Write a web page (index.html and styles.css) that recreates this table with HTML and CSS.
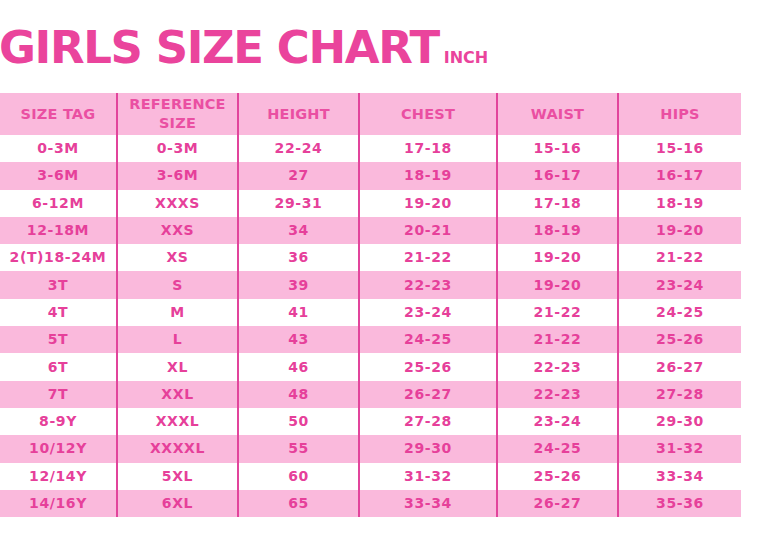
FILE: index.html
```html
<!DOCTYPE html>
<html>
<head>
<meta charset="utf-8">
<link rel="stylesheet" href="styles.css">
</head>
<body>
<div class="page">
  <h1 class="title">GIRLS SIZE CHART<span class="unit">INCH</span></h1>
  <div class="chart">
    <div class="row head">
      <div class="cell">SIZE TAG</div>
      <div class="cell">REFERENCE<br>SIZE</div>
      <div class="cell">HEIGHT</div>
      <div class="cell">CHEST</div>
      <div class="cell">WAIST</div>
      <div class="cell">HIPS</div>
    </div>
    <div class="row"><div class="cell">0-3M</div><div class="cell">0-3M</div><div class="cell">22-24</div><div class="cell">17-18</div><div class="cell">15-16</div><div class="cell">15-16</div></div>
    <div class="row alt"><div class="cell">3-6M</div><div class="cell">3-6M</div><div class="cell">27</div><div class="cell">18-19</div><div class="cell">16-17</div><div class="cell">16-17</div></div>
    <div class="row"><div class="cell">6-12M</div><div class="cell">XXXS</div><div class="cell">29-31</div><div class="cell">19-20</div><div class="cell">17-18</div><div class="cell">18-19</div></div>
    <div class="row alt"><div class="cell">12-18M</div><div class="cell">XXS</div><div class="cell">34</div><div class="cell">20-21</div><div class="cell">18-19</div><div class="cell">19-20</div></div>
    <div class="row"><div class="cell">2(T)18-24M</div><div class="cell">XS</div><div class="cell">36</div><div class="cell">21-22</div><div class="cell">19-20</div><div class="cell">21-22</div></div>
    <div class="row alt"><div class="cell">3T</div><div class="cell">S</div><div class="cell">39</div><div class="cell">22-23</div><div class="cell">19-20</div><div class="cell">23-24</div></div>
    <div class="row"><div class="cell">4T</div><div class="cell">M</div><div class="cell">41</div><div class="cell">23-24</div><div class="cell">21-22</div><div class="cell">24-25</div></div>
    <div class="row alt"><div class="cell">5T</div><div class="cell">L</div><div class="cell">43</div><div class="cell">24-25</div><div class="cell">21-22</div><div class="cell">25-26</div></div>
    <div class="row"><div class="cell">6T</div><div class="cell">XL</div><div class="cell">46</div><div class="cell">25-26</div><div class="cell">22-23</div><div class="cell">26-27</div></div>
    <div class="row alt"><div class="cell">7T</div><div class="cell">XXL</div><div class="cell">48</div><div class="cell">26-27</div><div class="cell">22-23</div><div class="cell">27-28</div></div>
    <div class="row"><div class="cell">8-9Y</div><div class="cell">XXXL</div><div class="cell">50</div><div class="cell">27-28</div><div class="cell">23-24</div><div class="cell">29-30</div></div>
    <div class="row alt"><div class="cell">10/12Y</div><div class="cell">XXXXL</div><div class="cell">55</div><div class="cell">29-30</div><div class="cell">24-25</div><div class="cell">31-32</div></div>
    <div class="row"><div class="cell">12/14Y</div><div class="cell">5XL</div><div class="cell">60</div><div class="cell">31-32</div><div class="cell">25-26</div><div class="cell">33-34</div></div>
    <div class="row alt"><div class="cell">14/16Y</div><div class="cell">6XL</div><div class="cell">65</div><div class="cell">33-34</div><div class="cell">26-27</div><div class="cell">35-36</div></div>
  </div>
</div>
</body>
</html>
```
FILE: styles.css
```css
html, body {
  margin: 0;
  padding: 0;
  background: #ffffff;
}
.page {
  font-family: "DejaVu Sans", Verdana, sans-serif;
  font-weight: bold;
  color: #e6409a;
  padding-top: 21px;
}
.title {
  margin: 0 0 0 -1px;
  font-size: 45px;
  line-height: 54px;
  letter-spacing: -1.4px;
  font-weight: bold;
  color: #ea449c;
  white-space: nowrap;
}
.unit {
  font-size: 16px;
  line-height: 1;
  letter-spacing: 0;
  margin-left: 5px;
}
.chart {
  margin-top: 18px;
  width: 741px;
}
.row {
  display: grid;
  grid-template-columns: 116px 121px 121px 138px 121px 124px;
  height: 27.3px;
}
.row.head {
  height: 42px;
  background: #fab9dc;
}
.row.alt {
  background: #fab9dc;
}
.cell {
  display: flex;
  align-items: center;
  justify-content: center;
  text-align: center;
  font-size: 14px;
  letter-spacing: 0.6px;
  line-height: 19px;
  white-space: nowrap;
}
.cell + .cell {
  border-left: 2px solid #e2449c;
}
.head .cell {
  font-size: 14.5px;
  letter-spacing: 0.2px;
  color: #ea4fa2;
}
```
